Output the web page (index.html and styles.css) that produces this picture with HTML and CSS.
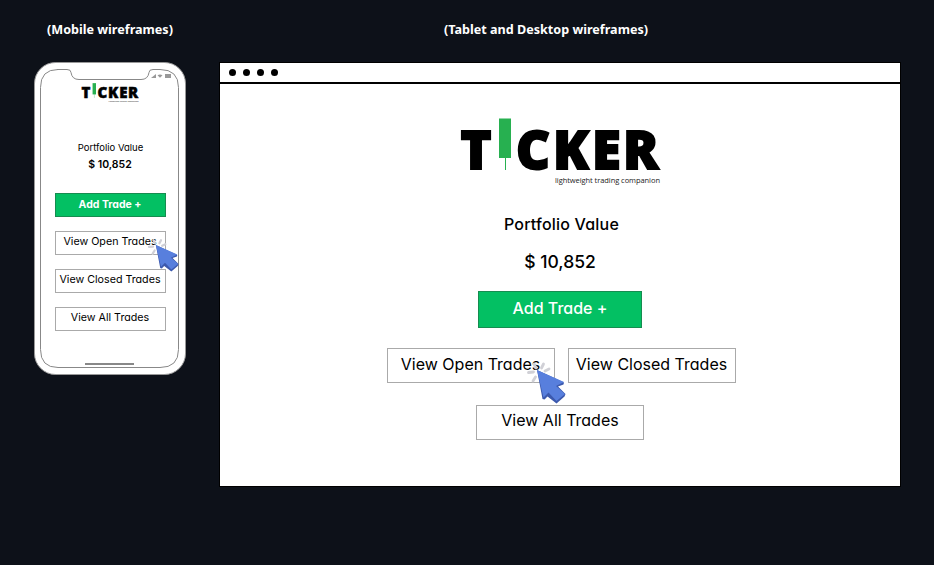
FILE: index.html
```html
<!DOCTYPE html>
<html lang="en">
<head>
<meta charset="utf-8">
<title>Ticker wireframes</title>
<link rel="stylesheet" href="styles.css">
</head>
<body>
<svg width="0" height="0" class="defs" aria-hidden="true">
  <symbol id="cursor" viewBox="0 0 40 44">
    <g stroke="#d0d0d6" stroke-width="2.800" stroke-linecap="round">
      <path d="M8 4l2 4M17.500 4l-2 4M2.500 12.500l5-.5M7 21l2.500-4M19 11l4-2"/>
    </g>
    <path d="M11 10l27 12.500-.5 2-5.500 2 7.500 7.500-1 2.500-8 7-9-7-3 3-2-.5z" fill="#3c59ad"/>
    <path d="M11 10l27 12-8 4 9 8-8.500 7-8-8.500-5 5z" fill="#587fdd"/>
  </symbol>
</svg>
<main class="board">
  <section class="mobile">
    <h2 class="caption">(Mobile wireframes)</h2>
    <div class="phone">
      <svg class="phone-frame" viewBox="0 0 152 314" fill="none">
        <rect x=".5" y=".5" width="151" height="312" rx="21" fill="#fff" stroke="#999"/>
        <path d="M23 7.500h10q4 0 4 3 1 7 8 7h62q7 0 8-7 0-3 4-3h7q18.500 0 18.500 18v262q0 18-18.500 18H24q-17.500 0-17.500-18v-262q0-18 17.500-18z" stroke="#888"/>
        <path d="M117 16l5-4v4zM131 12h6v4h-6zM123.500 13.200q2.500-1.500 5 0l-2.500 2.600z" fill="#999"/>
        <path d="M51 302h49" stroke="#888" stroke-width="2"/>
      </svg>
      <div class="phone-content">
        <svg class="logo-mobile" viewBox="0 0 202 70">
          <text class="logo-word" y="51" x="1.500 57 94 133 164">TCKER</text>
          <rect x="40" y="0.500" width="12" height="39.500" fill="#27b050"/>
          <path d="M46.500 39v13" stroke="#27b050"/>
          <text class="logo-tag" x="96" y="65" textLength="105">lightweight trading companion</text>
        </svg>
        <div class="m-label">Portfolio Value</div>
        <div class="m-value">$ 10,852</div>
        <div class="m-button m-add">Add Trade +</div>
        <div class="m-button m-open">View Open Trades<svg class="m-cursor"><use href="#cursor"/></svg></div>
        <div class="m-button">View Closed Trades</div>
        <div class="m-button">View All Trades</div>
      </div>
    </div>
  </section>
  <section class="desktop">
    <h2 class="caption caption-desktop">(Tablet and Desktop wireframes)</h2>
    <div class="window">
      <div class="titlebar"><i></i><i></i><i></i><i></i></div>
      <div class="content">
        <svg class="logo-desktop" viewBox="0 0 202 70">
          <text class="logo-word" y="51" x="1.500 57 94 133 164">TCKER</text>
          <rect x="40" y="0.500" width="12" height="39.500" fill="#27b050"/>
          <path d="M46.500 39v13" stroke="#27b050"/>
          <text class="logo-tag" x="96" y="65" textLength="105">lightweight trading companion</text>
        </svg>
        <div class="label">Portfolio Value</div>
        <div class="value">$ 10,852</div>
        <div class="button add">Add Trade +</div>
        <div class="row">
          <div class="button open">View Open Trades<svg class="cursor"><use href="#cursor"/></svg></div>
          <div class="button">View Closed Trades</div>
        </div>
        <div class="button all">View All Trades</div>
      </div>
    </div>
  </section>
</main>
</body>
</html>
```
FILE: styles.css
```css
* { box-sizing: border-box; }
body {
  margin: 0;
  background: #0d1119;
  color: #000;
  font-family: Inter, sans-serif;
  font-feature-settings: "cv11";
  overflow: hidden;
}
.defs { position: absolute; }
svg { display: block; }
.logo-word {
  font: 800 52.5px "Open Sans", sans-serif;
  fill: #000;
  stroke: #000;
  stroke-width: 1.8px;
}
.logo-tag { font: 400 7.5px "Open Sans", sans-serif; fill: #222; }

.board {
  display: grid;
  grid-template-columns: 152px 682px;
  column-gap: 33px;
  padding: 20px 0 0 34px;
  height: 565px;
}
.caption {
  margin: 0 0 22px;
  height: 20px;
  line-height: 20px;
  color: #fff;
  font-size: 12.6px;
  font-weight: 700;
  font-family: "Noto Sans", sans-serif;
  text-align: center;
  white-space: nowrap;
}
.caption-desktop { padding-right: 28px; }

.phone { display: grid; width: 152px; height: 314px; }
.phone-frame, .phone-content { grid-area: 1 / 1; }
.phone-frame { width: 152px; height: 314px; }
.phone-content {
  display: flex;
  flex-direction: column;
  align-items: center;
  padding-top: 21px;
  white-space: nowrap;
}
.logo-mobile { width: 58px; height: 20px; }
.m-label { margin: 37px 0 0 1px; font-size: 9.5px; line-height: 16px; }
.m-value { font-size: 10.5px; font-weight: 600; line-height: 17px; }
.m-button {
  position: relative;
  width: 111px;
  height: 24px;
  margin-top: 14px;
  border: 1px solid #aaa;
  font-size: 10.7px;
  line-height: 20px;
  text-align: center;
}
.m-add {
  margin-top: 20px;
  border-color: #168c50;
  background: #03c063;
  color: #fff;
  font-size: 10.5px;
  font-weight: 700;
  line-height: 22px;
}
.m-cursor { position: absolute; left: 91px; top: 5px; width: 32px; height: 35px; }

.window {
  width: 682px;
  height: 425px;
  border: 1px solid #000;
  background: #fff;
}
.titlebar {
  display: flex;
  align-items: center;
  gap: 7px;
  height: 21px;
  padding-left: 9px;
  border-bottom: 2px solid #000;
}
.titlebar i { width: 7px; height: 7px; border-radius: 50%; background: #000; }
.content {
  display: flex;
  flex-direction: column;
  align-items: center;
  padding-top: 34px;
  white-space: nowrap;
}
.logo-desktop { width: 202px; height: 70px; }
.label {
  margin: 24px 0 0 3px;
  font-size: 16px;
  font-weight: 500;
  line-height: 24px;
  letter-spacing: .2px;
}
.value { margin-top: 13px; font-size: 17.5px; font-weight: 500; line-height: 26px; }
.button {
  position: relative;
  width: 168px;
  height: 35px;
  border: 1px solid #aaa;
  font-size: 16px;
  line-height: 31px;
  text-align: center;
}
.add {
  width: 164px;
  height: 37px;
  margin-top: 16px;
  border-color: #168c50;
  background: #03c063;
  color: #fff;
  font-weight: 500;
  line-height: 32px;
}
.all { line-height: 29px; }
.row { display: flex; gap: 13px; margin: 20px 0 22px 2px; }
.cursor { position: absolute; left: 138px; top: 11px; width: 40px; height: 44px; }
```
